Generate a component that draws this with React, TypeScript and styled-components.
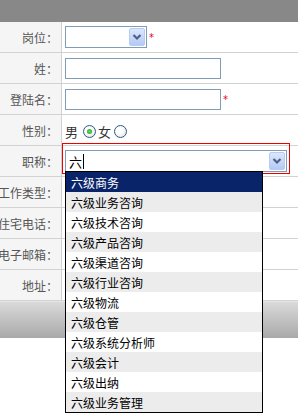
import styled, { createGlobalStyle } from "styled-components";

const GlobalStyle = createGlobalStyle`
  body{
    margin: 0;
    background: #fff;
    font-family: "Noto Sans CJK SC", "Noto Sans", sans-serif;
    font-size: 12px;
    overflow: hidden;
  }
`;

const Page = styled.div`
  position: relative;
  width: 298px;
  height: 419px;
  overflow: hidden;
`;

const Header = styled.div`
  height: 22px;
  background: #888888;
`;

const Row = styled.div`
  display: grid;
  grid-template-columns: 62px 1fr;
  height: 31px;
  box-sizing: border-box;
  border-bottom: 1px solid #d2d2d2;
`;

const Label = styled.div`
  display: flex;
  justify-content: flex-end;
  align-items: center;
  padding-right: 3px;
  background: #f5f5f5;
  border-right: 1px solid #d2d2d2;
  white-space: nowrap;
  color: #555;
  font-size: 12px;
`;

const Value = styled.div<{ $pad?: number }>`
  display: flex;
  align-items: center;
  padding-left: ${(p) => (p.$pad ?? 3)}px;
  gap: 4px;
`;

const Select = styled.div<{ $w: number }>`
  display: flex;
  justify-content: flex-end;
  align-items: center;
  position: relative;
  width: ${(p) => p.$w}px;
  height: 22px;
  box-sizing: border-box;
  border: 1px solid #7f9db9;
  background: #fff;
  padding: 1px;
`;

const SelectText = styled.span`
  flex: 1;
  display: flex;
  align-items: center;
  padding-left: 2px;
  font-size: 13px;
  color: #000;
`;

const Caret = styled.span`
  display: inline-block;
  width: 1px;
  height: 15px;
  margin-left: 1px;
  background: #000;
`;

const DropButton = styled.div`
  display: flex;
  align-items: center;
  justify-content: center;
  width: 16px;
  height: 18px;
  box-sizing: border-box;
  border: 1px solid #b8cbf3;
  border-radius: 2px;
  background: linear-gradient(#dce7fd, #b4c9f5);
`;

const TextInput = styled.div<{ $w: number }>`
  width: ${(p) => p.$w}px;
  height: 21px;
  box-sizing: border-box;
  border: 1px solid #7f9db9;
  background: #fff;
`;

const Star = styled.span`
  color: #e8001c;
  font-size: 10px;
  font-family: "DejaVu Sans", sans-serif;
  margin-left: -2px;
  margin-top: 2px;
  line-height: 1;
`;

const RadioGroup = styled.div`
  display: flex;
  align-items: center;
  margin-top: 2px;
  color: #333;
  font-size: 13px;
`;

const Option = styled.span<{ $gap: number }>`
  margin-right: ${(p) => p.$gap}px;
`;

const Radio = styled.span<{ $on?: boolean }>`
  position: relative;
  width: 13px;
  height: 13px;
  box-sizing: border-box;
  border-radius: 50%;
  border: 1px solid #2c5a86;
  background: radial-gradient(circle at 40% 40%, #fff 30%, #dcdcd4 100%);
  margin-right: 2px;
  &::after{
    content: "";
    display: ${(p) => (p.$on ? "block" : "none")};
    position: absolute;
    left: 3px;
    top: 3px;
    width: 5px;
    height: 5px;
    border-radius: 50%;
    background: radial-gradient(circle, #5ce05c 0%, #1e9b1e 100%);
  }
`;

const Focused = styled.div`
  align-self: flex-start;
  margin-top: -3px;
  width: 228px;
  height: 31px;
  box-sizing: border-box;
  border: 1px solid #ee0000;
  padding: 6px 1px 0 2px;
`;

const List = styled.ul`
  position: absolute;
  left: -1px;
  top: 100%;
  margin: 0;
  padding: 0;
  list-style: none;
  width: 198px;
  box-sizing: border-box;
  border: 1px solid #000;
  background: #fff;
  z-index: 5;
`;

const Item = styled.li<{ $sel?: boolean; $alt?: boolean }>`
  height: 20px;
  display: flex;
  align-items: center;
  padding-left: 5px;
  font-size: 12px;
  color: ${(p) => (p.$sel ? "#fff" : "#000")};
  background: ${(p) => (p.$sel ? "#0a246a" : p.$alt ? "#ececec" : "#fff")};
`;

const Footer = styled.div`
  height: 36px;
  border-top: 1px solid #e6e6e6;
  background: linear-gradient(#dadada, #a9a9a9);
`;

function Chevron() {
  return (
    <svg width="10" height="8" viewBox="0 0 10 8">
      <path d="M1.5 2 L5 5.5 L8.5 2" fill="none" stroke="#4d6185" strokeWidth="2.2" />
    </svg>
  );
}

const options = [
  "六级商务",
  "六级业务咨询",
  "六级技术咨询",
  "六级产品咨询",
  "六级渠道咨询",
  "六级行业咨询",
  "六级物流",
  "六级仓管",
  "六级系统分析师",
  "六级会计",
  "六级出纳",
  "六级业务管理",
];

export default function App() {
  return (
    <Page>
      <GlobalStyle />
      <Header />
      <Row>
        <Label>岗位：</Label>
        <Value>
          <Select $w={82}>
            <DropButton><Chevron /></DropButton>
          </Select>
          <Star>*</Star>
        </Value>
      </Row>
      <Row>
        <Label>姓：</Label>
        <Value>
          <TextInput $w={156} />
        </Value>
      </Row>
      <Row>
        <Label>登陆名：</Label>
        <Value>
          <TextInput $w={156} />
          <Star>*</Star>
        </Value>
      </Row>
      <Row>
        <Label>性别：</Label>
        <Value>
          <RadioGroup>
            <Option $gap={5}>男</Option>
            <Radio $on />
            <Option $gap={3}>女</Option>
            <Radio />
          </RadioGroup>
        </Value>
      </Row>
      <Row>
        <Label>职称：</Label>
        <Value $pad={0}>
          <Focused>
            <Select $w={222}>
              <SelectText>六<Caret /></SelectText>
              <DropButton><Chevron /></DropButton>
              <List>
                {options.map((o, i) => (
                  <Item key={o} $sel={i === 0} $alt={i % 2 === 1}>{o}</Item>
                ))}
              </List>
            </Select>
          </Focused>
        </Value>
      </Row>
      <Row>
        <Label>工作类型：</Label>
        <Value />
      </Row>
      <Row>
        <Label>住宅电话：</Label>
        <Value />
      </Row>
      <Row>
        <Label>电子邮箱：</Label>
        <Value />
      </Row>
      <Row>
        <Label>地址：</Label>
        <Value />
      </Row>
      <Footer />
    </Page>
  );
}
